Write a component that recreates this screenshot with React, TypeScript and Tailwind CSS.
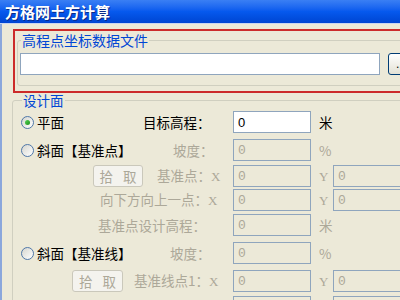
import React from "react";

const Radio = ({ checked = false }: { checked?: boolean }) => (
  <span className="flex w-[13px] h-[13px] shrink-0 items-center justify-center rounded-full border border-[#4f77a8] bg-linear-to-br from-[#d6d6cf] to-white">
    {checked && (
      <span className="w-[5px] h-[5px] rounded-full bg-linear-to-br from-[#55d455] to-[#1a8f1a]" />
    )}
  </span>
);

const Field = ({
  width,
  value = "0",
  disabled = true,
}: {
  width: string;
  value?: string;
  disabled?: boolean;
}) => (
  <div
    className={`${width} h-[22px] shrink-0 flex items-center pl-[4px] border border-[#8fa5bd] ${
      disabled
        ? "bg-[#ece9d8] text-[#aca899] font-['Liberation_Mono',monospace]"
        : "bg-white text-black font-['Liberation_Sans',sans-serif]"
    } text-[13px] leading-none`}
  >
    {value}
  </div>
);

const PickButton = ({ width }: { width: string }) => (
  <div
    className={`${width} h-[22px] shrink-0 flex items-center justify-center gap-[10px] rounded-[3px] border border-[#cac8bb] bg-[#f4f3ee] text-[#aca899] text-[13.5px] leading-[14px]`}
  >
    <span>拾</span>
    <span>取</span>
  </div>
);

const Axis = ({ children }: { children: React.ReactNode }) => (
  <span className="font-['Liberation_Serif',serif] text-[13px]">{children}</span>
);

const Unit = ({ children, dim = true }: { children: React.ReactNode; dim?: boolean }) => (
  <span
    className={`w-[22px] shrink-0 pl-[8px] text-[13.5px] leading-[14px] ${
      dim ? "text-[#aca899]" : "text-black"
    }`}
  >
    {children}
  </span>
);

export default function App() {
  return (
    <div className="relative w-[400px] h-[300px] overflow-hidden bg-[#ece9d8] font-['Noto_Sans_CJK_SC',sans-serif]">
      {/* title bar */}
      <div className="h-[23px] flex items-center pl-[5px] bg-linear-to-b from-[#3a7ff4] via-[#0659ee] to-[#0045d2]">
        <span className="text-white font-bold text-[15px] leading-[16px] [text-shadow:1px_1px_0_#0a2a88]">
          方格网土方计算
        </span>
      </div>
      <div className="h-[1px] bg-[#c9d5ef]" />

      <div className="flex w-[520px] h-[276px]">
        <div className="w-[2px] shrink-0 bg-[#8ba7dc]" />
        <div className="w-[500px] shrink-0">
          {/* data file group, marked in red (runs past the right edge) */}
          <div className="mt-[5px] ml-[11px] w-[480px] border-2 border-r-0 border-[#cc2b2b]">
            <fieldset className="mt-[2px] mb-[5px] ml-[2px] w-[460px] border border-[#d0cfc0] rounded-[3px] pl-[2px] pb-[10px]">
              <legend className="ml-[1px] px-[1px] text-[14px] leading-[14px] text-[#0046d5]">
                高程点坐标数据文件
              </legend>
              <div className="mt-[6px] flex items-center">
                <Field width="w-[360px]" value="" disabled={false} />
                <div className="ml-[8px] w-[26px] h-[22px] shrink-0 flex items-end justify-center pb-[4px] rounded-[3px] border border-[#003c74] bg-linear-to-b from-white to-[#e3e1d5] text-[12px] leading-none font-['Liberation_Sans',sans-serif]">
                  ...
                </div>
              </div>
            </fieldset>
          </div>

          {/* design surface group */}
          <fieldset className="ml-[10px] w-[480px] border border-[#d0cfc0] rounded-[3px] pl-[8px] pb-[10px]">
            <legend className="ml-[1px] px-[1px] text-[13.5px] leading-[14px] text-[#0046d5]">
              设计面
            </legend>

            {/* 平面 */}
            <div className="mt-[4px] flex items-center h-[22px]">
              <div className="w-[212px] shrink-0 flex items-center text-[13.5px] leading-[14px]">
                <div className="w-[122px] shrink-0 flex items-center gap-[3px]">
                  <Radio checked />
                  <span>平面</span>
                </div>
                <span>目标高程：</span>
              </div>
              <Field width="w-[78px]" disabled={false} />
              <Unit dim={false}>米</Unit>
            </div>

            {/* 斜面【基准点】 */}
            <div className="mt-[6px] flex items-center h-[22px]">
              <div className="w-[212px] shrink-0 flex items-center text-[13.5px] leading-[14px]">
                <div className="w-[152px] shrink-0 flex items-center gap-[3px]">
                  <Radio />
                  <span>斜面【基准点】</span>
                </div>
                <span className="text-[#aca899]">坡度：</span>
              </div>
              <Field width="w-[78px]" />
              <Unit>%</Unit>
            </div>

            <div className="mt-[4px] flex items-center h-[22px]">
              <div className="w-[212px] shrink-0 flex items-center text-[13.5px] leading-[14px] text-[#aca899]">
                <div className="w-[72px] shrink-0" />
                <PickButton width="w-[50px]" />
                <span className="ml-[14px] whitespace-nowrap">
                  基准点：<Axis>X</Axis>
                </span>
              </div>
              <Field width="w-[78px]" />
              <Unit>
                <Axis>Y</Axis>
              </Unit>
              <Field width="w-[100px]" />
            </div>

            <div className="mt-[2px] flex items-center h-[22px]">
              <div className="w-[212px] shrink-0 flex items-center text-[13.5px] leading-[14px] text-[#aca899]">
                <div className="w-[79px] shrink-0" />
                <span className="whitespace-nowrap">
                  向下方向上一点：<Axis>X</Axis>
                </span>
              </div>
              <Field width="w-[78px]" />
              <Unit>
                <Axis>Y</Axis>
              </Unit>
              <Field width="w-[100px]" />
            </div>

            <div className="mt-[3px] flex items-center h-[22px]">
              <div className="w-[212px] shrink-0 flex items-center text-[13.5px] leading-[14px] text-[#aca899]">
                <div className="w-[77px] shrink-0" />
                <span className="whitespace-nowrap">基准点设计高程：</span>
              </div>
              <Field width="w-[78px]" />
              <Unit>米</Unit>
            </div>

            {/* 斜面【基准线】 */}
            <div className="mt-[6px] flex items-center h-[22px]">
              <div className="w-[212px] shrink-0 flex items-center text-[13.5px] leading-[14px]">
                <div className="w-[149px] shrink-0 flex items-center gap-[3px]">
                  <Radio />
                  <span>斜面【基准线】</span>
                </div>
                <span className="text-[#aca899]">坡度：</span>
              </div>
              <Field width="w-[78px]" />
              <Unit>%</Unit>
            </div>

            <div className="mt-[6px] flex items-center h-[22px]">
              <div className="w-[212px] shrink-0 flex items-center text-[13.5px] leading-[14px] text-[#aca899]">
                <div className="w-[51px] shrink-0" />
                <PickButton width="w-[51px]" />
                <span className="ml-[11px] whitespace-nowrap">
                  基准线点1：<Axis>X</Axis>
                </span>
              </div>
              <Field width="w-[78px]" />
              <Unit>
                <Axis>Y</Axis>
              </Unit>
              <Field width="w-[100px]" />
            </div>

            <div className="mt-[4px] flex items-center h-[22px]">
              <div className="w-[212px] shrink-0 flex items-center text-[13.5px] leading-[14px] text-[#aca899]">
                <div className="w-[112px] shrink-0" />
                <span className="whitespace-nowrap">
                  基准线点2：<Axis>X</Axis>
                </span>
              </div>
              <Field width="w-[78px]" />
              <Unit>
                <Axis>Y</Axis>
              </Unit>
              <Field width="w-[100px]" />
            </div>
          </fieldset>
        </div>
      </div>
    </div>
  );
}
